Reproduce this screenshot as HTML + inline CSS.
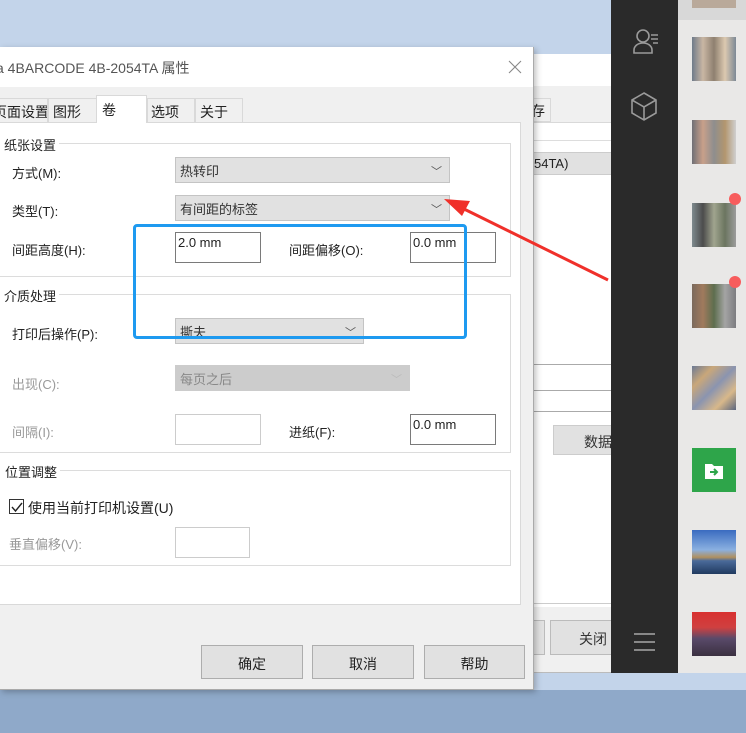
<!DOCTYPE html>
<html><head><meta charset="utf-8">
<style>
*{margin:0;padding:0;box-sizing:border-box}
body{width:746px;height:733px;overflow:hidden;position:relative;background:#8fa9c9;font-family:"Liberation Sans","Noto Sans CJK SC",sans-serif;font-size:13px;color:#222}
.a{position:absolute}
.cb{background:#e1e1e1;border:1px solid #c4c4c4;color:#333;padding:3px 4px;font-size:13px}
.cb.dis{background:#cccccc;color:#888;border-color:#ccc}
.tb{background:#fff;border:1px solid #7a7a7a;padding:2px 2px;font-size:13px}
.lbl{font-size:13px}
.gb{border:1px solid #dcdcdc}
.gt{background:#fff;padding:0 3px 0 4px;font-size:13px}
.btn{background:#e1e1e1;border:1px solid #adadad;text-align:center;font-size:14px}
.thumb{position:absolute;left:692px;width:44px;height:44px}
.arrow{font-size:11px;color:#555}
</style></head><body>
<div class="a" style="left:0;top:0;width:746px;height:690px;background:#c3d4ea"></div>
<!-- back window -->
<div class="a" style="left:373px;top:54px;width:240px;height:619px;background:#f0f0f0;border:1px solid #bbb"></div>
<div class="a" style="left:373px;top:54px;width:240px;height:32px;background:#fff"></div>
<div class="a" style="left:528px;top:98px;width:23px;height:24px;background:#f0f0f0;border:1px solid #d9d9d9;font-size:14px;padding:2px 2px">存</div>
<div class="a" style="left:373px;top:122px;width:240px;height:485px;background:#fff;border-top:1px solid #d9d9d9"></div>
<div class="a" style="left:373px;top:140px;width:240px;height:1px;background:#ddd"></div>
<div class="a" style="left:533px;top:152px;width:80px;height:23px;background:#e1e1e1;border:1px solid #ccc;font-size:13px;padding:3px 0">54TA)</div>
<div class="a" style="left:533px;top:364px;width:80px;height:27px;border:1px solid #aaa;border-right:none;background:#fff"></div>
<div class="a" style="left:533px;top:411px;width:80px;height:1px;background:#aaa"></div>
<div class="a" style="left:553px;top:425px;width:60px;height:30px;background:#e1e1e1;border:1px solid #ccc;font-size:14px;padding:6px 0 0 30px;color:#333;overflow:hidden;white-space:nowrap">数据库</div>
<div class="a" style="left:533px;top:603px;width:80px;height:1px;background:#ccc"></div>
<div class="a" style="left:533px;top:620px;width:12px;height:35px;background:#e1e1e1;border:1px solid #bbb"></div>
<div class="a" style="left:550px;top:620px;width:63px;height:35px;background:#e1e1e1;border:1px solid #bbb;font-size:14px;padding:8px 0 0 28px;color:#333">关闭</div>

<!-- sidebar -->
<div class="a" style="left:611px;top:0;width:67px;height:673px;background:#2a2a2a"></div>
<svg class="a" style="left:630px;top:26px" width="32" height="32" viewBox="0 0 32 32" fill="none" stroke="#9a9a9a" stroke-width="1.6"><circle cx="13" cy="10" r="6"/><path d="M4 27 L4 24 C4 20 8 17 13 17 C18 17 22 20 22 24 L22 27 Z"/><path d="M21 9h7M21 13h7M23 17h5"/></svg>
<svg class="a" style="left:630px;top:90px" width="28" height="32" viewBox="0 0 28 32" fill="none" stroke="#9a9a9a" stroke-width="1.6"><path d="M14 3 L26 10 L26 23 L14 30 L2 23 L2 10 Z M2 10 L14 17 L26 10 M14 17 L14 30"/></svg>
<div class="a" style="left:634px;top:633px;width:21px;height:2px;background:#888"></div>
<div class="a" style="left:634px;top:641px;width:21px;height:2px;background:#888"></div>
<div class="a" style="left:634px;top:649px;width:21px;height:2px;background:#888"></div>

<!-- right column -->
<div class="a" style="left:678px;top:0;width:68px;height:673px;background:#e9e8e7"></div>
<div class="a" style="left:678px;top:0;width:68px;height:20px;background:#d8d8d8"></div>
<div class="thumb" style="top:0;height:8px;background:#b9a99a"></div>
<div class="thumb" style="top:37px;background:linear-gradient(90deg,#6f7b8a,#c9b6a3,#8e8070,#dcc9b0,#7d8996)"></div>
<div class="thumb" style="top:120px;background:linear-gradient(90deg,#6f6f76,#c8a08a,#8e8e8e,#b3966e,#cfcfcf)"></div>
<div class="thumb" style="top:203px;background:linear-gradient(90deg,#7e8a8e,#4c4c4c,#a0a48e,#6b7560,#9c9c9c)"></div>
<div class="a" style="left:729px;top:193px;width:12px;height:12px;border-radius:50%;background:#f75d5d"></div>
<div class="thumb" style="top:284px;background:linear-gradient(90deg,#7b6a5d,#a07a5d,#5d6e4e,#a4a4a4,#7c7c80)"></div>
<div class="a" style="left:729px;top:276px;width:12px;height:12px;border-radius:50%;background:#f75d5d"></div>
<div class="thumb" style="top:366px;background:linear-gradient(135deg,#6c7a94,#c9a77a,#8a94b0,#d8b88a,#5a6680)"></div>
<div class="thumb" style="top:448px;background:#2ea54a"></div>
<svg class="a" style="left:704px;top:462px" width="20" height="18" viewBox="0 0 20 18"><path d="M1 2h7l2 2h9v13H1z" fill="#fff"/><path d="M6 10h7M10 7l3 3-3 3" stroke="#2ea54a" stroke-width="2" fill="none"/></svg>
<div class="thumb" style="top:530px;background:linear-gradient(180deg,#3a6bc0,#8ab0e0 45%,#b09060 62%,#4a6a9a 70%,#203a60)"></div>
<div class="thumb" style="top:612px;background:linear-gradient(180deg,#d83030,#d04040 35%,#5a4a6a 60%,#3a3040)"></div>

<!-- main dialog -->
<div class="a" style="left:0;top:47px;width:534px;height:643px;background:#f0f0f0;border:1px solid #aaa;border-left:none;box-shadow:2px 2px 6px rgba(0,0,0,.25)"></div>
<div class="a" style="left:0;top:47px;width:533px;height:40px;background:#fff"></div>
<div class="a" style="left:-4px;top:58px;font-size:14px;color:#555">a 4BARCODE 4B-2054TA 属性</div>
<svg class="a" style="left:508px;top:60px" width="14" height="14"><path d="M1 1L13 13M13 1L1 13" stroke="#888" stroke-width="1.1"/></svg>

<!-- tabs -->
<div class="a" style="left:0;top:98px;width:48px;height:25px;border:1px solid #d9d9d9;border-left:none;font-size:14px;padding:3px 0 0 0;white-space:nowrap;overflow:hidden"><span style="position:relative;left:-7px">页面设置</span></div>
<div class="a" style="left:48px;top:98px;width:49px;height:25px;border:1px solid #d9d9d9;font-size:14px;padding:3px 0 0 4px">图形</div>
<div class="a" style="left:96px;top:95px;width:51px;height:28px;background:#fff;border:1px solid #d9d9d9;border-bottom:none;font-size:14px;padding:4px 0 0 5px;z-index:2">卷</div>
<div class="a" style="left:147px;top:98px;width:48px;height:25px;border:1px solid #d9d9d9;font-size:14px;padding:3px 0 0 3px">选项</div>
<div class="a" style="left:195px;top:98px;width:48px;height:25px;border:1px solid #d9d9d9;font-size:14px;padding:3px 0 0 4px">关于</div>
<div class="a" style="left:0;top:122px;width:521px;height:483px;background:#fff;border:1px solid #d9d9d9;border-left:none"></div>

<!-- group 1 -->
<div class="a gb" style="left:0;top:143px;width:511px;height:134px;border-left:none"></div>
<div class="a gt" style="left:0;top:135px">纸张设置</div>
<div class="a lbl" style="left:12px;top:163px">方式(M):</div>
<div class="a cb" style="left:175px;top:157px;width:275px;height:26px">热转印<span class="a arrow" style="right:7px;top:5px">﹀</span></div>
<div class="a lbl" style="left:12px;top:201px">类型(T):</div>
<div class="a cb" style="left:175px;top:195px;width:275px;height:26px">有间距的标签<span class="a arrow" style="right:7px;top:5px">﹀</span></div>
<div class="a lbl" style="left:12px;top:240px">间距高度(H):</div>
<div class="a tb" style="left:175px;top:232px;width:86px;height:31px">2.0 mm</div>
<div class="a lbl" style="left:289px;top:240px">间距偏移(O):</div>
<div class="a tb" style="left:410px;top:232px;width:86px;height:31px">0.0 mm</div>

<!-- group 2 -->
<div class="a gb" style="left:0;top:294px;width:511px;height:159px;border-left:none"></div>
<div class="a gt" style="left:0;top:286px">介质处理</div>
<div class="a lbl" style="left:12px;top:324px">打印后操作(P):</div>
<div class="a cb" style="left:175px;top:318px;width:189px;height:26px">撕夫<span class="a arrow" style="right:7px;top:5px">﹀</span></div>
<div class="a lbl" style="left:12px;top:374px;color:#999">出现(C):</div>
<div class="a cb dis" style="left:175px;top:365px;width:235px;height:26px">每页之后<span class="a arrow" style="right:7px;top:5px;color:#bbb">﹀</span></div>
<div class="a lbl" style="left:12px;top:422px;color:#999">间隔(I):</div>
<div class="a tb" style="left:175px;top:414px;width:86px;height:31px;border-color:#ccc"></div>
<div class="a lbl" style="left:289px;top:422px">进纸(F):</div>
<div class="a tb" style="left:410px;top:414px;width:86px;height:31px">0.0 mm</div>

<!-- group 3 -->
<div class="a gb" style="left:0;top:470px;width:511px;height:96px;border-left:none"></div>
<div class="a gt" style="left:0;top:462px;padding-left:5px">位置调整</div>
<div class="a" style="left:9px;top:499px;width:15px;height:15px;border:1px solid #333;background:#fff"></div>
<svg class="a" style="left:10px;top:500px" width="14" height="14"><path d="M2 7L5.5 11L12 3" stroke="#222" stroke-width="1.4" fill="none"/></svg>
<div class="a lbl" style="left:28px;top:498px;font-size:14px">使用当前打印机设置(U)</div>
<div class="a lbl" style="left:9px;top:534px;color:#999">垂直偏移(V):</div>
<div class="a tb" style="left:175px;top:527px;width:75px;height:31px;border-color:#ccc"></div>

<!-- buttons -->
<div class="a btn" style="left:201px;top:645px;width:102px;height:34px;padding-top:8px">确定</div>
<div class="a btn" style="left:312px;top:645px;width:102px;height:34px;padding-top:8px">取消</div>
<div class="a btn" style="left:424px;top:645px;width:101px;height:34px;padding-top:8px">帮助</div>

<!-- highlight -->
<div class="a" style="left:133px;top:224px;width:334px;height:115px;border:3px solid #1e9af0;border-radius:4px"></div>
<!-- red arrow -->
<svg class="a" style="left:0;top:0" width="746" height="733"><line x1="608" y1="280" x2="460" y2="207" stroke="#f0302a" stroke-width="3"/><polygon points="444,199 470,201 462,216" fill="#f0302a"/></svg>
</body></html>
